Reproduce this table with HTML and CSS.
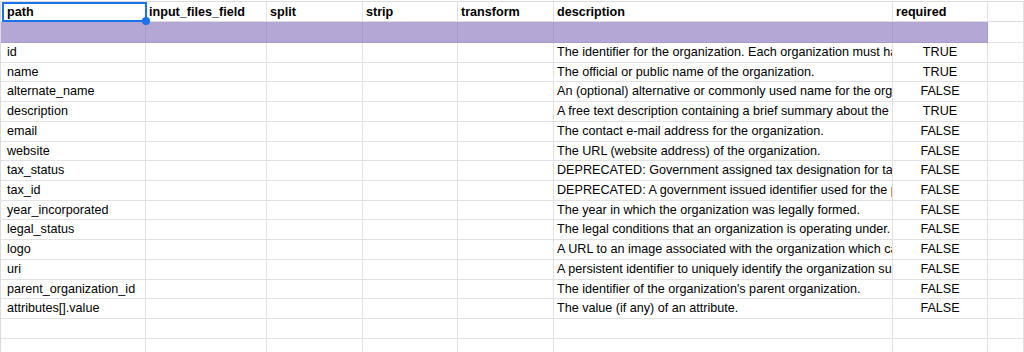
FILE: index.html
```html
<!DOCTYPE html>
<html>
<head>
<meta charset="utf-8">
<link rel="stylesheet" href="styles.css">
</head>
<body>
<div class="sheet">
  <div class="row head">
    <div class="cell a">path</div>
    <div class="cell">input_files_field</div>
    <div class="cell">split</div>
    <div class="cell">strip</div>
    <div class="cell">transform</div>
    <div class="cell">description</div>
    <div class="cell">required</div>
    <div class="cell"></div>
  </div>
  <div class="row band">
    <div class="cell a"></div><div class="cell"></div><div class="cell"></div><div class="cell"></div><div class="cell"></div><div class="cell"></div><div class="cell"></div><div class="cell blank"></div>
  </div>
  <div class="row data"><div class="cell a">id</div><div class="cell"></div><div class="cell"></div><div class="cell"></div><div class="cell"></div><div class="cell">The identifier for the organization. Each organization must have a unique identifier.</div><div class="cell c">TRUE</div><div class="cell"></div></div>
  <div class="row data"><div class="cell a">name</div><div class="cell"></div><div class="cell"></div><div class="cell"></div><div class="cell"></div><div class="cell">The official or public name of the organization.</div><div class="cell c">TRUE</div><div class="cell"></div></div>
  <div class="row data"><div class="cell a">alternate_name</div><div class="cell"></div><div class="cell"></div><div class="cell"></div><div class="cell"></div><div class="cell">An (optional) alternative or commonly used name for the organization.</div><div class="cell c">FALSE</div><div class="cell"></div></div>
  <div class="row data"><div class="cell a">description</div><div class="cell"></div><div class="cell"></div><div class="cell"></div><div class="cell"></div><div class="cell">A free text description containing a brief summary about the organization.</div><div class="cell c">TRUE</div><div class="cell"></div></div>
  <div class="row data"><div class="cell a">email</div><div class="cell"></div><div class="cell"></div><div class="cell"></div><div class="cell"></div><div class="cell">The contact e-mail address for the organization.</div><div class="cell c">FALSE</div><div class="cell"></div></div>
  <div class="row data"><div class="cell a">website</div><div class="cell"></div><div class="cell"></div><div class="cell"></div><div class="cell"></div><div class="cell">The URL (website address) of the organization.</div><div class="cell c">FALSE</div><div class="cell"></div></div>
  <div class="row data"><div class="cell a">tax_status</div><div class="cell"></div><div class="cell"></div><div class="cell"></div><div class="cell"></div><div class="cell">DEPRECATED: Government assigned tax designation for tax-exempt organizations.</div><div class="cell c">FALSE</div><div class="cell"></div></div>
  <div class="row data"><div class="cell a">tax_id</div><div class="cell"></div><div class="cell"></div><div class="cell"></div><div class="cell"></div><div class="cell">DEPRECATED: A government issued identifier used for the purpose of tax administration.</div><div class="cell c">FALSE</div><div class="cell"></div></div>
  <div class="row data"><div class="cell a">year_incorporated</div><div class="cell"></div><div class="cell"></div><div class="cell"></div><div class="cell"></div><div class="cell">The year in which the organization was legally formed.</div><div class="cell c">FALSE</div><div class="cell"></div></div>
  <div class="row data"><div class="cell a">legal_status</div><div class="cell"></div><div class="cell"></div><div class="cell"></div><div class="cell"></div><div class="cell">The legal conditions that an organization is operating under.</div><div class="cell c">FALSE</div><div class="cell"></div></div>
  <div class="row data"><div class="cell a">logo</div><div class="cell"></div><div class="cell"></div><div class="cell"></div><div class="cell"></div><div class="cell">A URL to an image associated with the organization which can be presented alongside its name.</div><div class="cell c">FALSE</div><div class="cell"></div></div>
  <div class="row data"><div class="cell a">uri</div><div class="cell"></div><div class="cell"></div><div class="cell"></div><div class="cell"></div><div class="cell">A persistent identifier to uniquely identify the organization such as those provided by Open Corporates.</div><div class="cell c">FALSE</div><div class="cell"></div></div>
  <div class="row data"><div class="cell a">parent_organization_id</div><div class="cell"></div><div class="cell"></div><div class="cell"></div><div class="cell"></div><div class="cell">The identifier of the organization's parent organization.</div><div class="cell c">FALSE</div><div class="cell"></div></div>
  <div class="row data"><div class="cell a">attributes[].value</div><div class="cell"></div><div class="cell"></div><div class="cell"></div><div class="cell"></div><div class="cell">The value (if any) of an attribute.</div><div class="cell c">FALSE</div><div class="cell"></div></div>
  <div class="row data"><div class="cell a"></div><div class="cell"></div><div class="cell"></div><div class="cell"></div><div class="cell"></div><div class="cell"></div><div class="cell"></div><div class="cell"></div></div>
  <div class="row data"><div class="cell a"></div><div class="cell"></div><div class="cell"></div><div class="cell"></div><div class="cell"></div><div class="cell"></div><div class="cell"></div><div class="cell"></div></div>
  <div class="row tail"><div class="cell a"></div><div class="cell"></div><div class="cell"></div><div class="cell"></div><div class="cell"></div><div class="cell"></div><div class="cell"></div><div class="cell"></div></div>
  <div class="selection"><span class="handle"></span></div>
</div>
</body>
</html>
```
FILE: styles.css
```css
html, body {
  margin: 0;
  padding: 0;
  background: #ffffff;
  overflow: hidden;
}
body {
  font-family: "Liberation Sans", Arial, sans-serif;
  font-size: 12.6px;
  color: #000000;
}
.sheet {
  position: relative;
  margin-top: 1px;
  border-top: 1px solid #dcdcdc;
  border-left: 1px solid #dcdcdc;
}
.row {
  display: grid;
  grid-template-columns: 145px 121px 96px 95px 96px 339px 95px 1fr;
}
.cell {
  box-sizing: border-box;
  border-right: 1px solid #e2e2e2;
  border-bottom: 1px solid #e2e2e2;
  padding: 0 0 0 3px;
  white-space: nowrap;
  overflow: hidden;
}
.cell.a {
  padding-left: 6px;
}
.cell.c {
  text-align: center;
  padding-left: 0;
}
.head .cell {
  height: 20px;
  padding-top: 1px;
  line-height: 18px;
  font-weight: bold;
  border-bottom-color: #dcdcdc;
}
.band .cell {
  height: 21px;
  background: #b4a7d6;
  border-right-color: #a89bc9;
  border-bottom-color: #a99cca;
}
.band .cell.blank {
  background: #ffffff;
  border-right-color: #e2e2e2;
  border-bottom-color: #e2e2e2;
}
.data .cell {
  height: 19.73px;
  line-height: 18.73px;
}
.tail .cell {
  height: 13px;
}
.selection {
  position: absolute;
  left: 1px;
  top: 0;
  width: 145px;
  height: 20px;
  box-sizing: border-box;
  border: 2px solid #1a73e8;
}
.handle {
  position: absolute;
  right: -5px;
  bottom: -5px;
  width: 8px;
  height: 8px;
  border-radius: 50%;
  background: #1a73e8;
}
```
